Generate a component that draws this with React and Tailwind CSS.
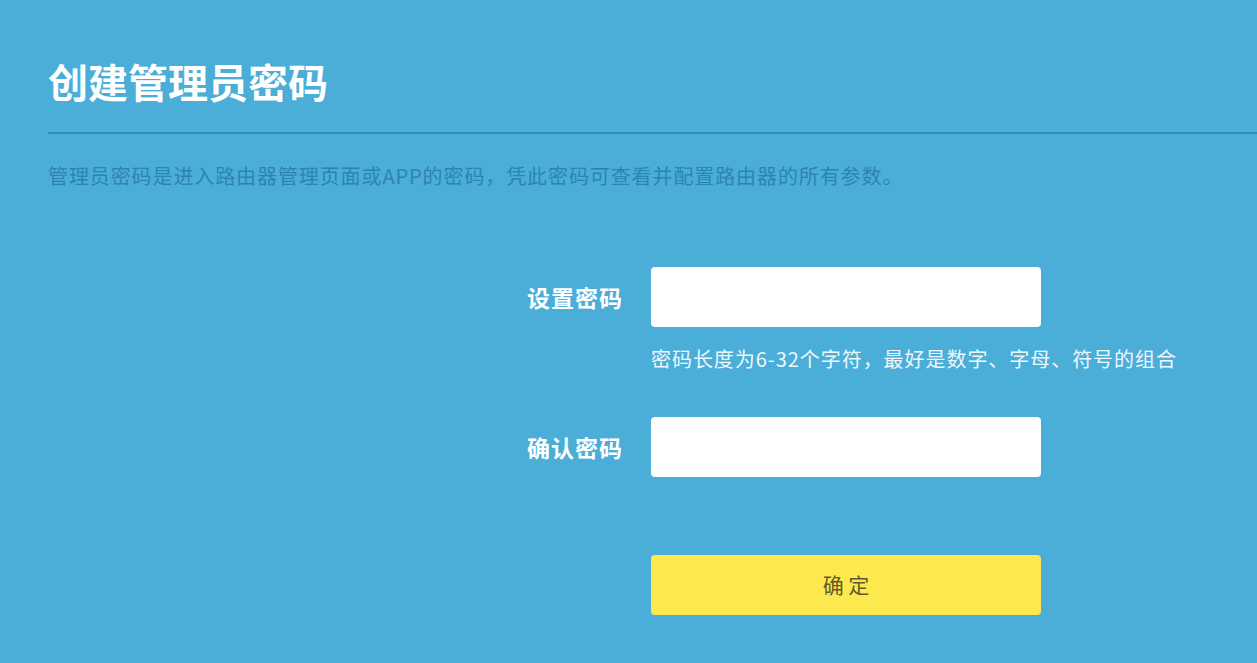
export default function App() {
  const font = { fontFamily: '"Noto Sans CJK SC", "Noto Sans", sans-serif' };
  return (
    <div className="w-[1257px] h-[663px] bg-[#4aaed9] overflow-hidden" style={font}>
      <div className="pl-[48px] pt-[61px]">
        <h1 className="text-[40px] leading-[40px] font-bold text-white">创建管理员密码</h1>
        <div className="mt-[31px] h-[2px] bg-[#2f8dbf]" />
        <p className="mt-[32px] text-[20px] leading-[20px] tracking-[0.9px] text-[#2d84b3]">
          管理员密码是进入路由器管理页面或APP的密码，凭此密码可查看并配置路由器的所有参数。
        </p>
        <div className="mt-[81px] flex flex-col">
          <div className="flex items-center gap-[28px]">
            <label className="w-[575px] text-right text-[23px] tracking-[1px] font-bold text-white leading-none">设置密码</label>
            <div className="w-[390px] h-[60px] bg-white rounded-[4px]" />
          </div>
          <p className="ml-[603px] mt-[22px] text-[20px] leading-[20px] tracking-[0.95px] text-[#eef7fb]">
            密码长度为6-32个字符，最好是数字、字母、符号的组合
          </p>
          <div className="mt-[48px] flex items-center gap-[28px]">
            <label className="w-[575px] text-right text-[23px] tracking-[1px] font-bold text-white leading-none">确认密码</label>
            <div className="w-[390px] h-[60px] bg-white rounded-[4px]" />
          </div>
          <div className="ml-[603px] mt-[78px]">
            <button className="w-[390px] h-[60px] bg-[#fde84e] rounded-[4px] text-[21px] text-[#5f5c2c] flex items-center justify-center">
              确 定
            </button>
          </div>
        </div>
      </div>
    </div>
  );
}
